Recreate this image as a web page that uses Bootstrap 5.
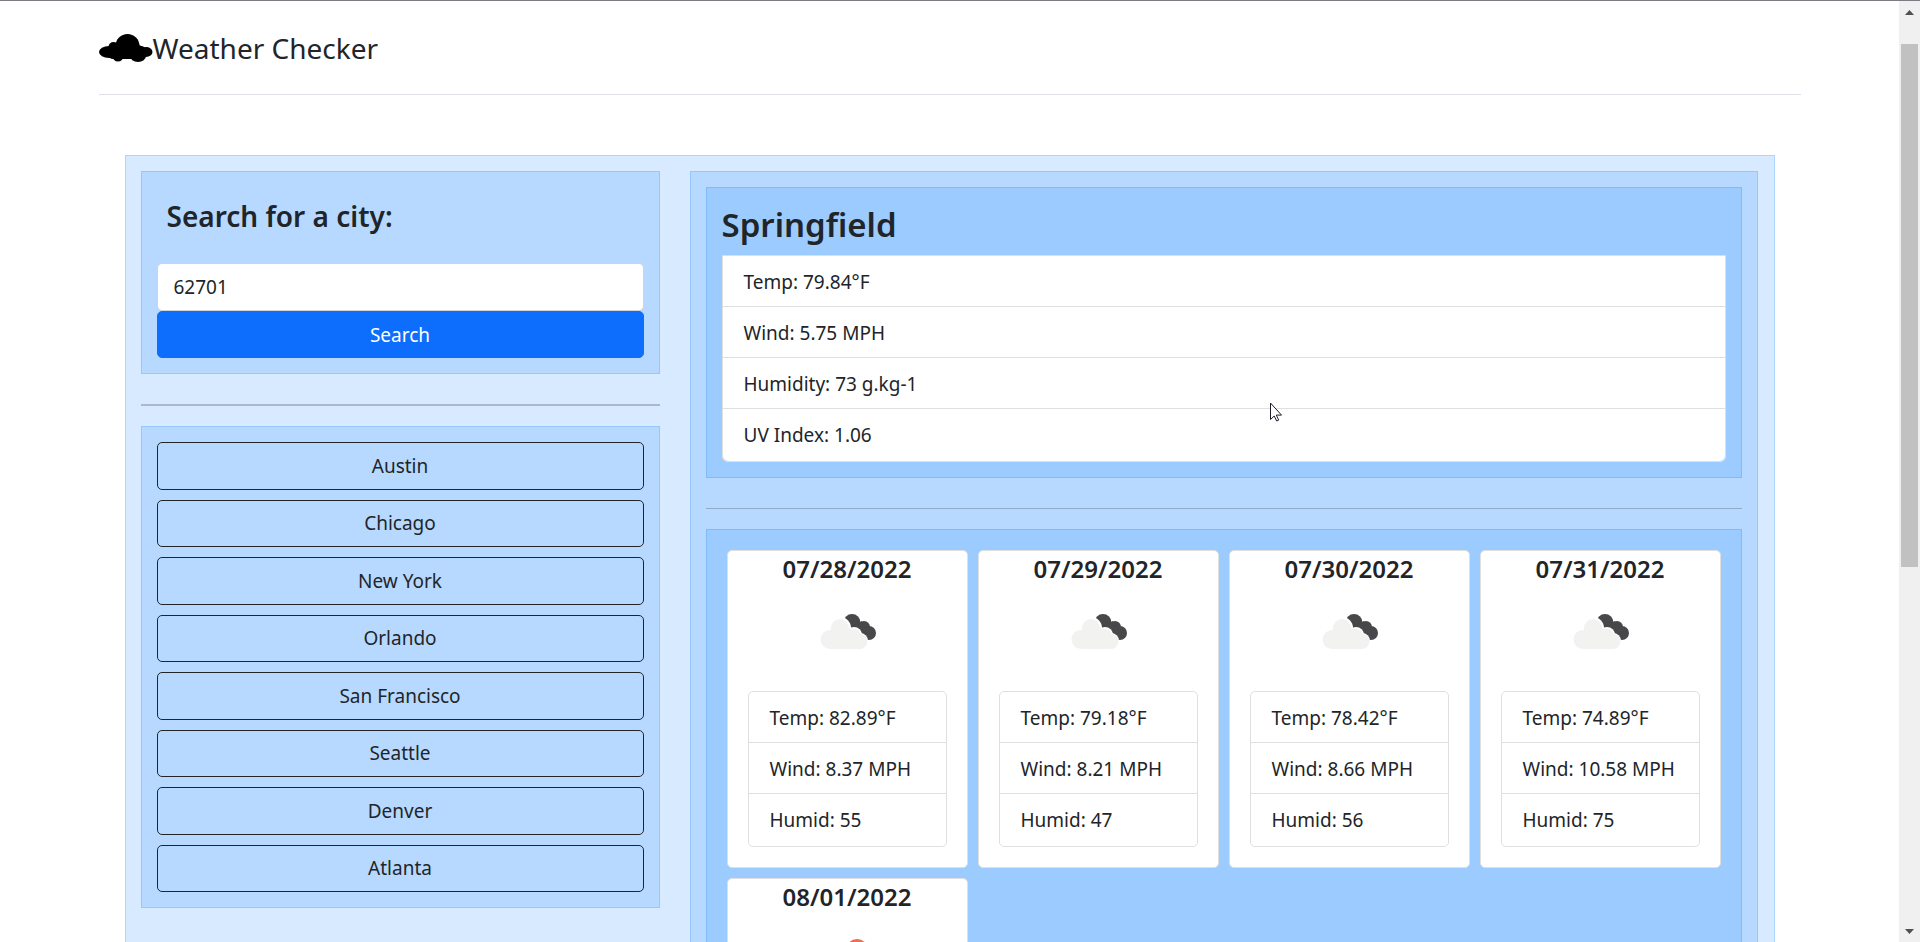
<!DOCTYPE html>
<html lang="en">
<head>
<meta charset="utf-8">
<meta name="viewport" content="width=device-width, initial-scale=1">
<title>Weather Checker</title>
<link href="https://cdn.jsdelivr.net/npm/bootstrap@5.3.0/dist/css/bootstrap.min.css" rel="stylesheet">
<style>
  html { font-size: 20px; }
  body { font-family: "Noto Sans", "Open Sans", sans-serif; font-size: 19px; line-height: 30px; color: #212529; }
  .shell { height: 100vh; overflow: hidden; border-top: 1px solid #7d7b82; }
  .page-head { max-width: 1702px; height: 94px; border-bottom: 1px solid #dee0e8; }
  .brand-text { font-size: 28px; line-height: 36px; color: #212529; }
  .brand-icon { width: 54px; height: 28px; }
  .panel-1 { max-width: 1650px; margin-top: 60px; padding: 15px 16px 15px 15px; background: #d8eaff; border: 1px solid #aed5ff; }
  .layout { display: grid; grid-template-columns: 519fr 1068fr; gap: 30px; min-height: 900px; }
  .panel-2 { padding: 15px; background: #b7d9ff; border: 1px solid #96c6fb; }
  .panel-3 { padding: 15px; background: #9cccff; border: 1px solid #7fbafb; }
  hr { margin: 30px 0 20px; color: #212529; opacity: .25; }
  .rule-thick { border-top-width: 2px; }
  .search-title { font-size: 28px; line-height: 36px; font-weight: 600; padding: 11px 10px 9px; margin-bottom: 20px; }
  .city-title { font-size: 33px; line-height: 42px; font-weight: 600; padding-top: 1px; margin-bottom: 9px; }
  .form-control, .btn { font-size: 19px; line-height: 30px; border-radius: 5px; height: 48px; padding: 8px 16px; }
  .form-control, .form-control:focus { color: #212529; background: #fff; border-color: #ced4da; }
  .btn-primary { height: 47px; --bs-btn-bg: #0d6efd; --bs-btn-border-color: #0d6efd; }
  .city-list { display: grid; grid-auto-rows: 1fr; gap: 10px; min-height: 450px; }
  .city-list .btn { height: auto; padding: 0 15px; color: #212529; border-color: #212529; }
  .stats { border: 1px solid #dfdfdf; border-radius: 5px; overflow: hidden; }
  .stats-top { border-top-left-radius: 0; border-top-right-radius: 0; }
  .stats .list-group-item { padding: 11px 20px 9px 21px; border-color: #dfdfdf; color: #212529; white-space: nowrap; }
  .stats .list-group-item:last-child { padding-bottom: 11px; }
  .forecast { padding: 20px; min-height: 700px; }
  .forecast-grid { display: grid; grid-template-columns: repeat(4, 1fr); gap: 10px; }
  .day { background: #fff; border: 1px solid #dfdfdf; border-radius: 5px; }
  .day-date { font-size: 24px; line-height: 36px; font-weight: 600; margin: 0; text-align: center; }
  .day-icon { width: 100px; height: 84px; display: block; margin: 0 auto 6px; }
  .day-body { padding: 14px 20px 20px; }
  .scroll { width: 21px; background: #f0f0f0; padding: 9px 2px 8px; }
  .thumb { height: 523px; margin-top: 29px; background: #c1c1c1; }
  .pointer { position: fixed; left: 1270px; top: 402px; width: 14px; height: 21px; }
</style>
</head>
<body>
<div class="shell d-flex">
  <main class="flex-grow-1">
    <header class="page-head mx-auto d-flex align-items-center">
      <a href="#" class="d-flex align-items-center text-decoration-none text-dark">
        <svg class="brand-icon" viewBox="0 0 54 28" aria-hidden="true"><g fill="#000"><ellipse cx="10" cy="18" rx="10" ry="6"/><circle cx="28.500" cy="12" r="12"/><circle cx="14.500" cy="13" r="5"/><circle cx="39" cy="17" r="6"/><ellipse cx="47" cy="18" rx="6.500" ry="5"/><circle cx="19" cy="22" r="5.500"/><ellipse cx="39" cy="22" rx="8" ry="6"/><rect x="10" y="12" width="36" height="13" rx="4"/></g></svg>
        <span class="brand-text">Weather Checker</span>
      </a>
    </header>

    <div class="panel-1 mx-auto">
      <div class="layout">
        <aside>
          <form class="panel-2" onsubmit="return false">
            <label for="city" class="search-title d-block">Search for a city:</label>
            <input id="city" type="text" class="form-control" value="62701">
            <button type="submit" class="btn btn-primary w-100">Search</button>
          </form>
          <hr class="rule-thick">
          <div class="panel-2">
            <div class="city-list">
              <button type="button" class="btn btn-outline-dark">Austin</button>
              <button type="button" class="btn btn-outline-dark">Chicago</button>
              <button type="button" class="btn btn-outline-dark">New York</button>
              <button type="button" class="btn btn-outline-dark">Orlando</button>
              <button type="button" class="btn btn-outline-dark">San Francisco</button>
              <button type="button" class="btn btn-outline-dark">Seattle</button>
              <button type="button" class="btn btn-outline-dark">Denver</button>
              <button type="button" class="btn btn-outline-dark">Atlanta</button>
            </div>
          </div>
        </aside>

        <section class="panel-2">
          <div class="panel-3">
            <h2 class="city-title">Springfield</h2>
            <ul class="list-group list-group-flush stats stats-top">
              <li class="list-group-item">Temp: 79.84°F</li>
              <li class="list-group-item">Wind: 5.75 MPH</li>
              <li class="list-group-item">Humidity: 73 g.kg-1</li>
              <li class="list-group-item">UV Index: 1.06</li>
            </ul>
          </div>
          <hr>
          <div class="panel-3 forecast">
            <div class="forecast-grid">
              <article class="day">
                <h4 class="day-date">07/28/2022</h4>
                <div class="day-body">
                  <svg class="day-icon" viewBox="0 0 100 84" aria-hidden="true"><use href="#clouds"/></svg>
                  <ul class="list-group list-group-flush stats"><li class="list-group-item">Temp: 82.89°F</li><li class="list-group-item">Wind: 8.37 MPH</li><li class="list-group-item">Humid: 55</li></ul>
                </div>
              </article>
              <article class="day">
                <h4 class="day-date">07/29/2022</h4>
                <div class="day-body">
                  <svg class="day-icon" viewBox="0 0 100 84" aria-hidden="true"><use href="#clouds"/></svg>
                  <ul class="list-group list-group-flush stats"><li class="list-group-item">Temp: 79.18°F</li><li class="list-group-item">Wind: 8.21 MPH</li><li class="list-group-item">Humid: 47</li></ul>
                </div>
              </article>
              <article class="day">
                <h4 class="day-date">07/30/2022</h4>
                <div class="day-body">
                  <svg class="day-icon" viewBox="0 0 100 84" aria-hidden="true"><use href="#clouds"/></svg>
                  <ul class="list-group list-group-flush stats"><li class="list-group-item">Temp: 78.42°F</li><li class="list-group-item">Wind: 8.66 MPH</li><li class="list-group-item">Humid: 56</li></ul>
                </div>
              </article>
              <article class="day">
                <h4 class="day-date">07/31/2022</h4>
                <div class="day-body">
                  <svg class="day-icon" viewBox="0 0 100 84" aria-hidden="true"><use href="#clouds"/></svg>
                  <ul class="list-group list-group-flush stats"><li class="list-group-item">Temp: 74.89°F</li><li class="list-group-item">Wind: 10.58 MPH</li><li class="list-group-item">Humid: 75</li></ul>
                </div>
              </article>
              <article class="day">
                <h4 class="day-date">08/01/2022</h4>
                <div class="day-body">
                  <svg class="day-icon" viewBox="0 0 100 84" aria-hidden="true"><circle cx="60" cy="21" r="11" fill="#ec6e4c"/></svg>
                </div>
              </article>
            </div>
          </div>
        </section>
      </div>
    </div>
  </main>

  <div class="scroll d-flex flex-column flex-shrink-0" aria-hidden="true">
    <svg class="mx-auto flex-shrink-0" width="9" height="5"><path d="M0 5 4.500 0 9 5z" fill="#505050"/></svg>
    <div class="thumb"></div>
    <svg class="mx-auto mt-auto flex-shrink-0" width="9" height="5"><path d="M0 0h9L4.500 5z" fill="#505050"/></svg>
  </div>
</div>

<svg class="pointer" viewBox="0 0 14 21" aria-hidden="true"><path d="M.5 1v16.500l3.700-3.500 2.500 5 2-.9-2.400-5h5.200z" fill="#fff" stroke="#1b1b2a"/></svg>

<svg width="0" height="0" class="position-absolute" aria-hidden="true">
  <symbol id="clouds" viewBox="0 0 100 84">
    <g fill="#48484a"><circle cx="55" cy="21.500" r="8.500"/><circle cx="67" cy="26" r="6"/><circle cx="72" cy="32" r="7"/><path d="M50 27 65 20 71 39 62 38z"/></g>
    <g fill="#fff"><circle cx="43" cy="27" r="11"/><circle cx="57" cy="34" r="8"/><circle cx="63" cy="40" r="8"/></g>
    <g fill="#f2f2f0"><circle cx="43" cy="27" r="9"/><circle cx="57" cy="35" r="7"/><circle cx="33" cy="38.500" r="9.500"/><circle cx="63" cy="40.500" r="7.500"/><path d="M34 27h18l11 8v13H33z"/></g>
  </symbol>
</svg>
<script src="https://cdn.jsdelivr.net/npm/bootstrap@5.3.0/dist/js/bootstrap.bundle.min.js"></script>
</body>
</html>
